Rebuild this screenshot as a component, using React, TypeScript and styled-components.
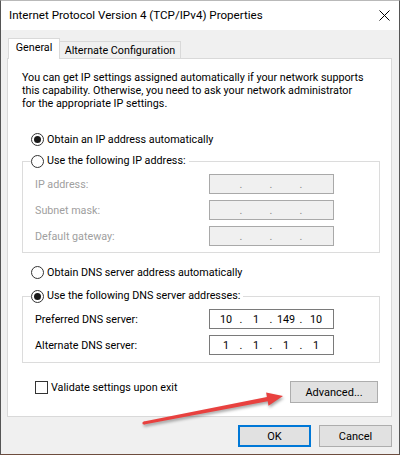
import React from "react";
import styled, { createGlobalStyle, css } from "styled-components";

const GlobalStyle = createGlobalStyle`
  body {
    margin: 0;
    background: #fff;
  }
  * {
    box-sizing: border-box;
  }
`;

const Window = styled.div`
  position: relative;
  width: 400px;
  height: 455px;
  background: #f0f0f0;
  border: 1px solid #555;
  border-top-color: #b9b9b9;
  border-bottom-color: #6d4c3d;
  font-family: Roboto, "Liberation Sans", sans-serif;
  font-size: 10.75px;
  color: #000;
  overflow: hidden;
`;

const TitleBar = styled.div`
  height: 29px;
  background: #fff;
  display: flex;
  align-items: center;
  justify-content: space-between;
  padding: 0 9px 0 8px;
`;

const Title = styled.span`
  font-size: 11.6px;
  padding-bottom: 1px;
`;

const Body = styled.div`
  padding: 8px 7px 0 6px;
`;

const TabStrip = styled.div`
  position: relative;
  z-index: 1;
  display: flex;
  align-items: flex-end;
  height: 20px;
  padding-left: 1px;
`;

const Tab = styled.div<{ $active?: boolean; $w: number }>`
  width: ${(p) => p.$w}px;
  display: flex;
  align-items: center;
  justify-content: center;
  border: 1px solid #d9d9d9;
  ${(p) =>
    p.$active
      ? css`
          height: 21px;
          margin-bottom: -1px;
          background: #fff;
          border-bottom: none;
          padding-bottom: 4px;
        `
      : css`
          height: 17px;
          background: #f0f0f0;
          border-left: none;
          border-bottom: none;
        `}
`;

const Panel = styled.div`
  height: 359px;
  background: #fff;
  border: 1px solid #d9d9d9;
  padding: 12px 11px 0 14px;
`;

const Description = styled.p`
  margin: 0;
  line-height: 13px;
  white-space: nowrap;
`;

const Option = styled.label<{ $mt?: number }>`
  display: flex;
  align-items: center;
  gap: 3px;
  height: 14px;
  margin-top: ${(p) => p.$mt ?? 0}px;
  margin-left: 9px;
`;

const LegendOption = styled.span`
  display: inline-flex;
  align-items: center;
  gap: 3px;
  height: 14px;
`;

const RadioMark = styled.span<{ $checked?: boolean }>`
  width: 13px;
  height: 13px;
  flex-shrink: 0;
  border-radius: 50%;
  border: 1px solid #333;
  background: #fff;
  display: flex;
  align-items: center;
  justify-content: center;
  &::after {
    content: "";
    width: 7px;
    height: 7px;
    border-radius: 50%;
    background: #1a1a1a;
    display: ${(p) => (p.$checked ? "block" : "none")};
  }
`;

const Group = styled.fieldset<{ $mt: number; $pb: number }>`
  margin: ${(p) => p.$mt}px 0 0;
  padding: 6px 0 ${(p) => p.$pb}px 0;
  width: 358px;
  min-inline-size: 0;
  border: 1px solid #dcdcdc;
`;

const Legend = styled.legend`
  margin-left: 8px;
  padding: 0 3px 0 0;
  height: 14px;
  line-height: 14px;
`;

const FieldRow = styled.div<{ $disabled?: boolean }>`
  display: grid;
  grid-template-columns: 174px 125px;
  align-items: center;
  height: 20px;
  margin-left: 12px;
  color: ${(p) => (p.$disabled ? "#a0a0a0" : "#000")};
  & + & {
    margin-top: 6px;
  }
`;

const IpBox = styled.div<{ $disabled?: boolean }>`
  display: flex;
  align-items: center;
  height: 20px;
  padding: 0 4px 0 3px;
  border: 1px solid ${(p) => (p.$disabled ? "#a9a9a9" : "#7a7a7a")};
  background: ${(p) => (p.$disabled ? "#f0f0f0" : "#fff")};
  color: ${(p) => (p.$disabled ? "#8a8a8a" : "#000")};
`;

const Octet = styled.span`
  width: 26px;
  text-align: center;
`;

const Dot = styled.span`
  width: 4px;
  text-align: center;
`;

const BottomRow = styled.div`
  display: flex;
  justify-content: space-between;
  align-items: flex-start;
  margin-top: 18px;
  padding: 0 2px 0 13px;
`;

const CheckRow = styled.label`
  display: flex;
  align-items: center;
  gap: 3px;
  height: 13px;
`;

const CheckMark = styled.span`
  width: 13px;
  height: 13px;
  border: 1px solid #333;
  background: #fff;
`;

const Button = styled.button<{ $primary?: boolean; $w: number }>`
  width: ${(p) => p.$w}px;
  height: 22px;
  padding: 0;
  background: #e1e1e1;
  border: 1px solid #adadad;
  font-family: inherit;
  font-size: 11px;
  color: #000;
  ${(p) =>
    p.$primary &&
    css`
      border: 2px solid #0078d7;
    `}
`;

const Footer = styled.div`
  display: flex;
  justify-content: flex-end;
  gap: 8px;
  margin-top: 8px;
`;

const Annotation = styled.svg`
  position: absolute;
  left: -1px;
  top: -1px;
  pointer-events: none;
  filter: drop-shadow(1px 2px 1.5px rgba(0, 0, 0, 0.35));
`;

const IpField = ({ values, disabled }: { values?: string[]; disabled?: boolean }) => {
  const parts = values ?? ["", "", "", ""];
  return (
    <IpBox $disabled={disabled}>
      {parts.map((v, i) => (
        <React.Fragment key={i}>
          {i > 0 && <Dot>.</Dot>}
          <Octet>{v}</Octet>
        </React.Fragment>
      ))}
    </IpBox>
  );
};

const App = () => {
  return (
    <>
      <GlobalStyle />
      <Window>
        <TitleBar>
          <Title>Internet Protocol Version 4 (TCP/IPv4) Properties</Title>
          <svg width="11" height="11" viewBox="0 0 11 11">
            <path d="M0.5 0.5 L10.5 10.5 M10.5 0.5 L0.5 10.5" stroke="#000" strokeWidth="1" />
          </svg>
        </TitleBar>
        <Body>
          <TabStrip>
            <Tab $active $w={52}>General</Tab>
            <Tab $w={121}>Alternate Configuration</Tab>
          </TabStrip>
          <Panel>
            <Description>
              You can get IP settings assigned automatically if your network supports
              <br />
              this capability. Otherwise, you need to ask your network administrator
              <br />
              for the appropriate IP settings.
            </Description>

            <Option $mt={22}>
              <RadioMark $checked />
              Obtain an IP address automatically
            </Option>

            <Group $mt={8} $pb={6}>
              <Legend>
                <LegendOption>
                  <RadioMark />
                  Use the following IP address:
                </LegendOption>
              </Legend>
              <FieldRow $disabled>
                <span>IP address:</span>
                <IpField disabled />
              </FieldRow>
              <FieldRow $disabled>
                <span>Subnet mask:</span>
                <IpField disabled />
              </FieldRow>
              <FieldRow $disabled>
                <span>Default gateway:</span>
                <IpField disabled />
              </FieldRow>
            </Group>

            <Option $mt={12}>
              <RadioMark />
              Obtain DNS server address automatically
            </Option>

            <Group $mt={10} $pb={7}>
              <Legend>
                <LegendOption>
                  <RadioMark $checked />
                  Use the following DNS server addresses:
                </LegendOption>
              </Legend>
              <FieldRow>
                <span>Preferred DNS server:</span>
                <IpField values={["10", "1", "149", "10"]} />
              </FieldRow>
              <FieldRow>
                <span>Alternate DNS server:</span>
                <IpField values={["1", "1", "1", "1"]} />
              </FieldRow>
            </Group>

            <BottomRow>
              <CheckRow>
                <CheckMark />
                Validate settings upon exit
              </CheckRow>
              <Button $w={88}>Advanced...</Button>
            </BottomRow>
          </Panel>
          <Footer>
            <Button $primary $w={73}>OK</Button>
            <Button $w={73}>Cancel</Button>
          </Footer>
        </Body>
        <Annotation width="400" height="455" viewBox="0 0 400 455">
          <polygon
            points="144.2,424.6 267.7,401.3 268.5,405.8 283,396 266.1,392.4 266.9,396.9 143.8,421.4"
            fill="#e8413f"
          />
          <circle cx="144" cy="423" r="1.6" fill="#e8413f" />
        </Annotation>
      </Window>
    </>
  );
};

export default App;
